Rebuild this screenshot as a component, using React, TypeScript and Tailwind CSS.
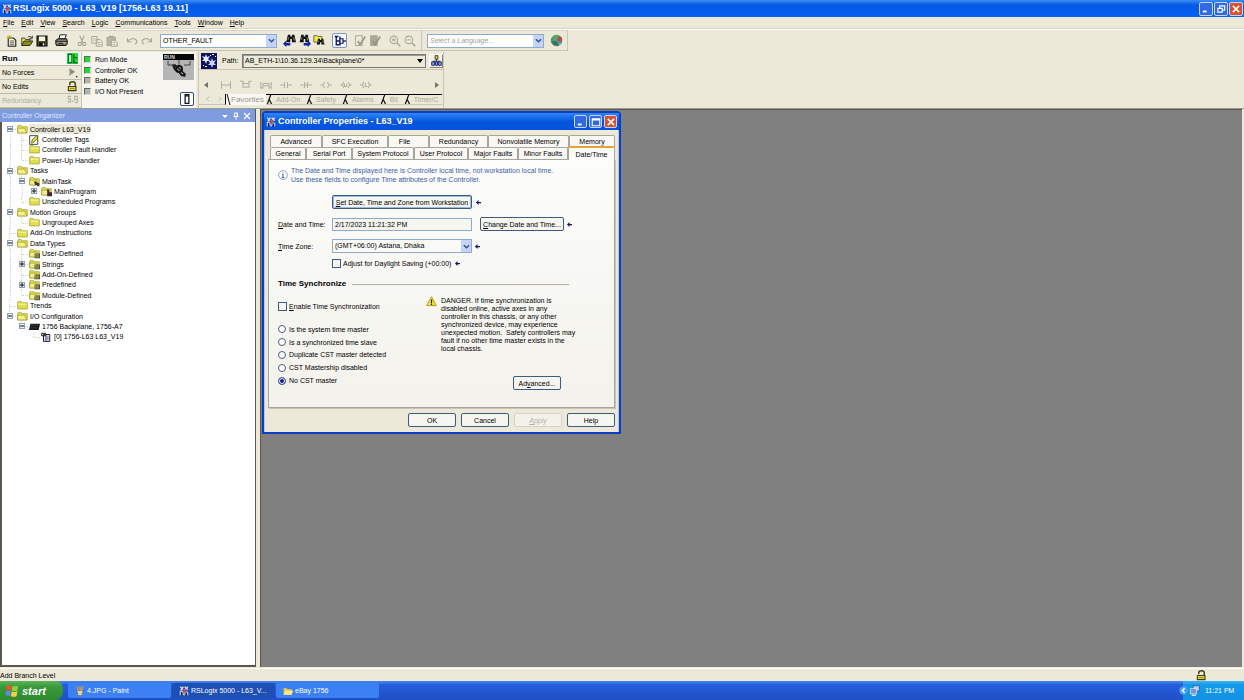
import { useState, type ReactNode } from 'react';
import clsx from 'clsx';

/* ---------- icons ---------- */

function Svg({ size = 'size-3', children }: { size?: string; children: ReactNode }) {
  return (
    <svg viewBox="0 0 16 16" className={clsx('shrink-0', size)} fill="none" aria-hidden="true">
      {children}
    </svg>
  );
}

const AppIcon = ({ size = 'size-[10px]' }: { size?: string }) => (
  <Svg size={size}>
    <path d="M2 15V8l4 1 1 6M9 15l1-6 4 1v5" fill="#10245c" stroke="#dfe6fa" strokeWidth="1.600" />
    <path d="M2 1l4 5M7 1L3 7" stroke="#dfe6fa" strokeWidth="2" />
    <path d="M9 1l5 5M14 1L9 7" stroke="#f4d9d9" strokeWidth="2.200" />
    <path d="M6 6l5 4M11 5l-4 5" stroke="#d23b3b" strokeWidth="2" />
  </Svg>
);

const NewIcon = () => (
  <Svg>
    <path d="M3 4h7l3 3v8H3z" fill="#fffbe0" stroke="#222" strokeWidth="1.5" />
    <path d="M5 8h6M5 10.5h6M5 13h6" stroke="#222" />
    <path d="M4 0v5M1 2l6 2M7 1L2 5" stroke="#b8a800" strokeWidth="1.2" />
  </Svg>
);

const OpenIcon = () => (
  <Svg>
    <path d="M1 14V4h4l1 2h6v3" fill="#f4ea5a" stroke="#333" strokeWidth="1.2" />
    <path d="M1 14l3-6h12l-4 6z" fill="#8f8a10" stroke="#222" strokeWidth="1.2" />
    <path d="M9 3c2-2 4-1 5 1M15 1v4h-4" stroke="#222" strokeWidth="1.2" />
  </Svg>
);

const SaveIcon = () => (
  <Svg>
    <path d="M1.5 1.5h13v13h-13z" fill="#55561a" stroke="#111" strokeWidth="1.8" />
    <path d="M4 2h8v6H4z" fill="#f4f3ec" />
    <path d="M4 10h8v5H4z" fill="#111" />
    <path d="M9 11h2v3H9z" fill="#eee" />
  </Svg>
);

const PrintIcon = () => (
  <Svg size="size-[13px]">
    <path d="M5 6l1-5h8l-2 5z" fill="#fff" stroke="#222" strokeWidth="1.2" />
    <path d="M1 8l3-2h10l1 2v4l-2 2H2l-1-2z" fill="#8a8a84" stroke="#222" strokeWidth="1.3" />
    <path d="M1 9h14M4 12h7" stroke="#222" strokeWidth="1.2" />
    <path d="M10 11h2" stroke="#e8e020" strokeWidth="1.5" />
  </Svg>
);

const CutIcon = () => (
  <Svg>
    <path d="M5 1l4 9M11 1L7 10" stroke="#aca899" strokeWidth="1.6" />
    <circle cx="5" cy="12" r="2.2" stroke="#aca899" strokeWidth="1.5" />
    <circle cx="11" cy="12" r="2.2" stroke="#aca899" strokeWidth="1.5" />
  </Svg>
);

const CopyIcon = () => (
  <Svg>
    <path d="M1 2h7v9H1zM7 6h5l3 3v6H7z" fill="#ece9d8" stroke="#aca899" strokeWidth="1.3" />
    <path d="M3 5h3M3 7h3M9 10h4M9 12.500h4" stroke="#aca899" />
  </Svg>
);

const PasteIcon = () => (
  <Svg>
    <path d="M1.500 3h11v11h-11z" fill="#b9b5a5" stroke="#aca899" strokeWidth="1.5" />
    <path d="M4 1h6v3H4z" fill="#aca899" />
    <path d="M7 7h5l3 3v5H7z" fill="#ece9d8" stroke="#a09c8d" strokeWidth="1.2" />
    <path d="M9 10h3M9 12.500h4" stroke="#aca899" />
  </Svg>
);

const UndoIcon = ({ flip = false }: { flip?: boolean }) => (
  <Svg>
    <g transform={flip ? 'matrix(-1 0 0 1 16 0)' : undefined}>
      <path d="M2 4v5h5M2 9c3-5 9-5 12-2 1 2 0 4-2 5" stroke="#aca899" strokeWidth="1.6" />
    </g>
  </Svg>
);

const BinocularIcon = ({ mode }: { mode: 'prev' | 'next' | 'folder' }) => (
  <Svg size="size-[13px]">
    {mode === 'folder' && <path d="M1 2h4l1 1h5v7H1z" fill="#f4ea3a" stroke="#555" />}
    <g transform={mode === 'folder' ? 'translate(3 5) scale(.8)' : mode === 'prev' ? 'translate(2 0)' : undefined}>
      <path d="M4 1h3v2h2V1h3l2 9H9V6H7v4H2z" fill="#111" />
      <path d="M4 7l1-3M11 4l1 4" stroke="#aaa" />
    </g>
    {mode === 'prev' && <path d="M0 12l4-4v3h5v3H4v2z" fill="#1226a8" />}
    {mode === 'next' && <path d="M16 12l-4-4v3H7v3h5v2z" fill="#1226a8" />}
  </Svg>
);

const TreeToggleIcon = () => (
  <Svg>
    <path d="M1 2h5M3 2v12M3 8h4M3 13h4M8 2v12" stroke="#111a60" strokeWidth="1.800" />
    <path d="M8 5h4v6H8z" fill="#fff" stroke="#111a60" strokeWidth="1.600" />
    <path d="M12 8h4" stroke="#111a60" strokeWidth="1.800" />
  </Svg>
);

const VerifyIcon = ({ solid = false }: { solid?: boolean }) => (
  <Svg>
    <path d="M2 1h9v13H2z" fill={solid ? '#aca899' : '#ece9d8'} stroke="#aca899" strokeWidth="1.3" />
    <path d="M5 8l3 5 7-11" stroke="#96927f" strokeWidth="2" />
  </Svg>
);

const ZoomIcon = ({ plus = false }: { plus?: boolean }) => (
  <Svg>
    <circle cx="6.500" cy="6.500" r="5" stroke="#aca899" strokeWidth="1.400" />
    <path d={plus ? 'M4 6.500h5M6.500 4v5' : 'M4 6.500h5'} stroke="#aca899" strokeWidth="1.400" />
    <path d="M10 10l5 5" stroke="#aca899" strokeWidth="2.200" />
  </Svg>
);

const GlobeIcon = () => (
  <Svg size="size-[13px]">
    <circle cx="8" cy="8" r="6.500" fill="#5b8f9c" stroke="#4d6f74" />
    <path d="M3 4c3-3 7-3 9-1l-3 4-4 1z" fill="#4fae5c" />
    <path d="M2 9c4-1 8 0 9 5-5 1-8-1-9-5z" fill="#357a49" />
    <circle cx="12" cy="6" r="3" fill="#c2463f" />
    <path d="M10 11h5l-3 3z" fill="#7faeb8" />
  </Svg>
);

const ControllerIcon = () => (
  <Svg size="size-[11px]">
    <path d="M0 0h16v16H0z" fill="#22dd33" />
    <path d="M2 2h5v12H2z" fill="#a8f8a8" stroke="#063" strokeWidth="1.500" />
    <path d="M10 2v5h5M10 9v5h5" stroke="#0a5a18" strokeWidth="1.800" />
  </Svg>
);

const ForceIcon = () => (
  <Svg size="size-[11px]">
    <path d="M4 2v11M5 3l6 4-6 4z" fill="#8d8a7c" stroke="#8d8a7c" />
    <path d="M13 13h2v2h-2z" fill="#222" />
  </Svg>
);

const LockIcon = () => (
  <Svg size="size-[11px]">
    <path d="M4 6V4c0-4 8-4 8 0v5" stroke="#3c3a10" strokeWidth="2" />
    <path d="M2 8h11v6H2z" fill="#e6dc3c" stroke="#3c3a10" strokeWidth="1.600" />
    <path d="M4 11h7" stroke="#6f6a14" />
  </Svg>
);

const RedundancyIcon = () => (
  <Svg size="size-[11px]">
    <path d="M6 2H2v4h3v4H1M7 9h3M15 2h-4v5h4V2v9h-4" stroke="#b3af9f" strokeWidth="1.500" />
  </Svg>
);

const PathIcon = () => (
  <Svg size="size-4">
    <path d="M0 0h16v16H0z" fill="#10125c" />
    <path d="M5 1l1 3 3-1-2 3 2 2-3 0-1 3-1-3-3 0 2-2-2-3 3 1z" fill="#e8eeff" />
    <path d="M11 5l1 3 3-1-2 3 2 2-3 0-1 3-1-3-3 0 2-2-2-3 3 1z" fill="#c9d6ff" />
    <path d="M11 1h2v1h-2zM14 3h1v1h-1zM2 12h1v1H2zM4 13h2v1H4zM9 2h1v1H9z" fill="#fff" />
  </Svg>
);

const NetworkIcon = () => (
  <Svg size="size-[11px]">
    <path d="M8 6v3M3 11V9h10v2" stroke="#222" strokeWidth="1.300" />
    <path d="M6 1h4v5H6z" fill="#f0e850" stroke="#223" strokeWidth="1.300" />
    <path d="M1 10h4v5H1zM6.500 10h3v5h-3zM11 10h4v5h-4z" fill="#8fa2e0" stroke="#16206e" strokeWidth="1.300" />
  </Svg>
);

function KeySwitch() {
  return (
    <svg viewBox="0 0 31 26" className="h-[26px] w-[31px]" aria-hidden="true">
      <path d="M0 0h31v26H0z" fill="#b5b5b5" />
      <path d="M0 0h31v6H0z" fill="#080808" />
      <text x="1" y="5" fontSize="5" fontWeight="bold" fontFamily="Liberation Sans, sans-serif" fill="#ddd">RUN</text>
      <path d="M5 7v4h6M16 6v5M27 7v4h-6" fill="none" stroke="#444" />
      <path d="M9 11l3-1 11 10-1 3-4-1-3-4-4-2z" fill="#1c1c1c" />
      <path d="M12 13l8 7" stroke="#d8d8d8" />
      <circle cx="16" cy="15" r="3" fill="none" stroke="#111" strokeWidth="2" />
    </svg>
  );
}

// contact / coil symbols on the instruction bar
const rungPaths = [
  'M2 3v10M14 3v10M2 8h12',
  'M0 3h4v8h8V3h4M4 6h8',
  'M1 4v9M15 4v9M1 12h3V6h8v6h3M4 9h8',
  'M0 8h5M11 8h5M6 4v8M10 4v8',
  'M0 8h5M11 8h5M6 4v8M10 4v8M5 11l6-6',
  'M0 8h3M13 8h3M6 4l-2 4 2 4M10 4l2 4-2 4',
  'M0 8h3M13 8h3M5 4L3 8l2 4M11 4l2 4-2 4M6 6v4h3V6',
  'M0 8h3M13 8h3M5 4L3 8l2 4M11 4l2 4-2 4M7 5v5h3',
];

type NodeIcon = 'open' | 'closed' | 'tags' | 'task' | 'program' | 'type' | 'chassis' | 'module';

function TreeIcon({ kind }: { kind: NodeIcon }) {
  if (kind === 'tags') {
    return (
      <Svg size="size-[10px]">
        <path d="M1 1h13v14H1z" fill="#fbfbe8" stroke="#444" strokeWidth="1.500" />
        <path d="M4 13l1-5 6-6 3 3-6 6z" fill="#e3df3c" stroke="#55551c" strokeWidth="1.200" />
      </Svg>
    );
  }
  if (kind === 'chassis') {
    return (
      <Svg size="size-[11px]">
        <path d="M2 4h14l-2 9H0z" fill="#191919" />
        <path d="M3 6h10M3 10h9" stroke="#666" strokeDasharray="2 1" />
      </Svg>
    );
  }
  if (kind === 'module') {
    return (
      <Svg size="size-[10px]">
        <path d="M1 2h6v4H1zM4 4h10v11H4z" fill="#e8e8f4" stroke="#222" strokeWidth="1.600" />
        <path d="M8 5v9M10 8h2M10 11h2" stroke="#222a66" strokeWidth="1.500" />
      </Svg>
    );
  }
  return (
    <Svg size="size-[11px]">
      <path d="M1 13V3l1-1h4l1 2h8v9z" fill="#e2df4e" stroke="#9a9728" />
      {kind === 'closed' ? (
        <path d="M2 6h12" stroke="#f8f7b0" strokeWidth="1.500" />
      ) : (
        <path d="M1 13V6h10l3 7z" fill="#f3f18c" stroke="#9a9728" />
      )}
      {kind === 'task' && <path d="M7 8h4l1 2h3v5h-3v-2H9z" fill="#3b3b30" />}
      {kind === 'program' && <path d="M9 5h3v4h4v6H9z" fill="#3f2436" />}
      {kind === 'type' && (
        <>
          <path d="M8 8h8v7H8z" fill="#57562c" />
          <path d="M10 9v5M13 9v5" stroke="#e8e6a0" />
        </>
      )}
    </Svg>
  );
}

const Chevron = () => (
  <span className="pointer-events-none absolute inset-y-px right-px flex w-[10px] items-center justify-center rounded-[1px] bg-[#c3d3fb]">
    <svg viewBox="0 0 8 8" className="size-[7px]" fill="none">
      <path d="M1 2.500L4 5.500 7 2.500" stroke="#3a5280" strokeWidth="1.600" />
    </svg>
  </span>
);

const PendingArrow = () => (
  <svg viewBox="0 0 8 8" className="size-[5px] shrink-0" aria-hidden="true">
    <path d="M0 4l4-4v3h4v2H4v3z" fill="#10106e" />
  </svg>
);

/* ---------- shared bits ---------- */

// first letter after & gets the underline
function Mnemonic({ text }: { text: string }) {
  const [before, after] = text.split('&');
  if (after === undefined) return <>{text}</>;
  return (
    <span className="whitespace-pre">
      {before}
      <u>{after[0]}</u>
      {after.slice(1)}
    </span>
  );
}

function WindowButtons({ small = false }: { small?: boolean }) {
  const base = clsx(
    'flex items-center justify-center rounded-[2px] border border-[#c5d5fa]',
    small ? 'size-[13px]' : 'size-[14px]'
  );
  return (
    <div className={clsx('flex', small ? 'gap-[2px]' : 'gap-px')}>
      <button aria-label="Minimize" className={clsx(base, 'bg-[#3369e0]')}>
        <Svg size="size-[10px]"><path d="M3 12h6" stroke="#fff" strokeWidth="3" /></Svg>
      </button>
      <button aria-label="Maximize" className={clsx(base, 'bg-[#3369e0]')}>
        <Svg size="size-[10px]">
          {small ? (
            <path d="M2 3h12v11H2zM2 4.500h12" stroke="#fff" strokeWidth="1.800" />
          ) : (
            <path d="M6 6V3h8v7h-3M3 7h7v6H3z" stroke="#fff" strokeWidth="1.800" />
          )}
        </Svg>
      </button>
      <button aria-label="Close" className={clsx(base, 'bg-[#d9522f]')}>
        <Svg size="size-[10px]"><path d="M3 3l10 10M13 3L3 13" stroke="#fff" strokeWidth="2.400" /></Svg>
      </button>
    </div>
  );
}

function PushButton({ label, className, disabled = false, focus = false }: {
  label: string;
  className: string;
  disabled?: boolean;
  focus?: boolean;
}) {
  return (
    <button
      disabled={disabled}
      className={clsx(
        'flex h-[14px] items-center justify-center whitespace-nowrap rounded-[2px] border',
        disabled ? 'border-[#d6d3c4] bg-[#f3f2ea] italic text-[#b5b1a2]' : 'border-[#3d5a80] bg-[#f6f5f0] text-black',
        focus && 'shadow-[inset_0_0_0_1px_#9db8e8]',
        className
      )}
    >
      <Mnemonic text={label} />
    </button>
  );
}

/* ---------- top area ---------- */

const menus = ['&File', '&Edit', '&View', '&Search', '&Logic', '&Communications', '&Tools', '&Window', '&Help'];

function IconButton({ label, children, pressed = false }: { label: string; children: ReactNode; pressed?: boolean }) {
  return (
    <button
      aria-label={label}
      className={clsx(
        'flex h-[15px] w-[15px] shrink-0 items-center justify-center',
        pressed && 'rounded-[2px] border border-[#7d95c6] bg-[#f8f9fd]'
      )}
    >
      {children}
    </button>
  );
}

function Toolbar() {
  return (
    <div className="flex h-[21px] w-[568px] items-center border-y border-r border-[#c9c5b4] border-t-[#d8d4c5] pl-1">
      <IconButton label="New"><NewIcon /></IconButton>
      <IconButton label="Open"><OpenIcon /></IconButton>
      <IconButton label="Save"><SaveIcon /></IconButton>
      <div className="ml-[5px] flex">
        <IconButton label="Print"><PrintIcon /></IconButton>
      </div>
      <div className="ml-[5px] flex">
        <IconButton label="Cut"><CutIcon /></IconButton>
        <IconButton label="Copy"><CopyIcon /></IconButton>
        <IconButton label="Paste"><PasteIcon /></IconButton>
      </div>
      <div className="ml-[5px] flex">
        <IconButton label="Undo"><UndoIcon /></IconButton>
        <IconButton label="Redo"><UndoIcon flip /></IconButton>
      </div>
      <div className="relative ml-[6px] w-[117px]">
        <select aria-label="Tag" className="block h-[14px] w-full appearance-none border border-[#8fa9cf] bg-white pl-[2px] leading-3">
          <option>OTHER_FAULT</option>
        </select>
        <Chevron />
      </div>
      <div className="ml-[5px] flex">
        <IconButton label="Find previous"><BinocularIcon mode="prev" /></IconButton>
        <IconButton label="Find next"><BinocularIcon mode="next" /></IconButton>
        <IconButton label="Find all"><BinocularIcon mode="folder" /></IconButton>
      </div>
      <div className="ml-[5px] flex">
        <IconButton label="Controller organizer" pressed><TreeToggleIcon /></IconButton>
      </div>
      <div className="ml-[5px] flex">
        <IconButton label="Verify routine"><VerifyIcon /></IconButton>
        <IconButton label="Verify controller"><VerifyIcon solid /></IconButton>
      </div>
      <div className="ml-[5px] flex">
        <IconButton label="Zoom in"><ZoomIcon plus /></IconButton>
        <IconButton label="Zoom out"><ZoomIcon /></IconButton>
      </div>
      <div className="ml-1 h-full w-px bg-[#c9c5b4]" />
      <div className="relative ml-[5px] w-[117px]">
        <select aria-label="Language" className="block h-[14px] w-full appearance-none border border-[#8fa9cf] bg-white pl-[2px] text-[7px] italic leading-3 text-[#a0a0a0]">
          <option>Select a Language...</option>
        </select>
        <Chevron />
      </div>
      <div className="ml-[5px] flex">
        <IconButton label="Web"><GlobeIcon /></IconButton>
      </div>
    </div>
  );
}

const modeRows = [
  { text: 'Run', icon: <ControllerIcon />, className: 'bg-[#f8f7f2] text-[8px] font-bold' },
  { text: 'No Forces', icon: <ForceIcon />, className: '' },
  { text: 'No Edits', icon: <LockIcon />, className: '' },
  { text: 'Redundancy', icon: <RedundancyIcon />, className: 'text-[#b3af9f]' },
];

const statusRows = [
  { text: 'Run Mode', on: true },
  { text: 'Controller OK', on: true },
  { text: 'Battery OK', on: false },
  { text: 'I/O Not Present', on: false },
];

const instructionTabs = ['Add-On', 'Safety', 'Alarms', 'Bit', 'Timer/C'];

function OnlineBar() {
  return (
    <div className="flex h-[56px]">
      <div className="grid w-[82px] auto-rows-fr border-r border-[#c9c5b4]">
        {modeRows.map((row) => (
          <div key={row.text} className={clsx('flex items-center justify-between border-b border-[#c0bcab] pl-[2px] pr-[3px]', row.className)}>
            <span>{row.text}</span>
            {row.icon}
          </div>
        ))}
      </div>
      <div className="flex w-[114px] justify-between bg-[#f6f5ef] pl-[2px] pr-[2px] pt-[2px]">
        <ul className="grid h-[43px] auto-rows-fr">
          {statusRows.map((row) => (
            <li key={row.text} className="flex items-center gap-[4px]">
              <span className={clsx('size-[7px] border border-t-[#5d6b57] border-l-[#5d6b57] border-[#dcdcd0]', row.on ? 'bg-[#1fdc35]' : 'bg-[#b4b1a8]')} />
              {row.text}
            </li>
          ))}
        </ul>
        <div className="flex flex-col items-end justify-between pb-[2px]">
          <KeySwitch />
          <button aria-label="Controller properties" className="flex size-[14px] items-center justify-center rounded-[2px] border border-[#2c4a72] bg-white">
            <Svg size="size-[10px]">
              <path d="M5 1h6v14H5z" fill="#fff" stroke="#111" strokeWidth="2" />
              <path d="M5 3h6" stroke="#111" strokeWidth="2" />
            </Svg>
          </button>
        </div>
      </div>
      <div className="ml-[2px] w-[246px] border-x border-[#c9c5b4]">
        <div className="flex h-[18px] items-center border-b border-[#c9c5b4] pl-[2px]">
          <PathIcon />
          <label htmlFor="path" className="ml-[5px] w-5">Path:</label>
          <div className="relative w-[184px]">
            <select id="path" className="block h-[14px] w-full appearance-none border border-[#777] bg-[#ece9d8] pl-[2px] leading-3 shadow-[inset_1px_1px_0_#999]">
              <option>AB_ETH-1\10.36.129.34\Backplane\0*</option>
            </select>
            <span className="pointer-events-none absolute right-[3px] top-[5px] border-x-[3px] border-t-[4px] border-x-transparent border-t-black" />
          </div>
          <button aria-label="Who active" className="ml-[3px] flex size-[14px] items-center justify-center border border-[#8b887a] border-l-white border-t-white bg-[#f3f1e6]">
            <NetworkIcon />
          </button>
        </div>
        <div className="flex h-6 items-center pl-[5px] pt-[6px]">
          <span className="mr-3 border-y-[3px] border-r-[4px] border-y-transparent border-r-[#77746a]" />
          <div className="flex flex-1 gap-2">
            {rungPaths.map((d) => (
              <Svg key={d}>
                <path d={d} stroke="#b3af9f" strokeWidth="1.400" />
              </Svg>
            ))}
          </div>
          <span className="mr-1 border-y-[3px] border-l-[4px] border-y-transparent border-l-[#77746a]" />
        </div>
        <div className="flex h-[11px] overflow-hidden pr-px text-[#aca899]">
          <span className="flex w-[27px] items-center gap-[6px] border-b border-r border-[#c9c5b4] border-r-black pl-[6px]">
            <Svg size="size-[6px]"><path d="M11 2L4 8l7 6" stroke="#b8b4a4" strokeWidth="2" /></Svg>
            <Svg size="size-[6px]"><path d="M4 2l7 6-7 6" stroke="#b8b4a4" strokeWidth="2" /></Svg>
          </span>
          <span className="flex items-center bg-[#f8f7f2] pr-[2px] text-[8px] text-[#9c988a]">
            <svg viewBox="0 0 5 11" className="h-[11px] w-[5px]"><path d="M1 0l3 11" stroke="#111" /></svg>
            Favorites
          </span>
          <div className="flex min-w-0 flex-1 overflow-hidden border-b border-t border-[#c9c5b4] border-t-black">
            {instructionTabs.map((tab) => (
              <span key={tab} className="flex shrink-0 items-center whitespace-nowrap pr-[6px]">
                <svg viewBox="0 0 8 11" className="h-[11px] w-[8px]" fill="none"><path d="M1 11L5 0M3 5l3 6" stroke="#111" strokeWidth="1.200" /></svg>
                <span className="pl-[2px]">{tab}</span>
              </span>
            ))}
          </div>
        </div>
      </div>
    </div>
  );
}

/* ---------- controller organizer ---------- */

interface TreeNode {
  text: string;
  depth: number;
  icon: NodeIcon;
  box?: '+' | '-';
}

const tree: TreeNode[] = [
  { text: 'Controller L63_V19', depth: 0, icon: 'open', box: '-' },
  { text: 'Controller Tags', depth: 1, icon: 'tags' },
  { text: 'Controller Fault Handler', depth: 1, icon: 'closed' },
  { text: 'Power-Up Handler', depth: 1, icon: 'closed' },
  { text: 'Tasks', depth: 0, icon: 'open', box: '-' },
  { text: 'MainTask', depth: 1, icon: 'task', box: '-' },
  { text: 'MainProgram', depth: 2, icon: 'program', box: '+' },
  { text: 'Unscheduled Programs', depth: 1, icon: 'closed' },
  { text: 'Motion Groups', depth: 0, icon: 'open', box: '-' },
  { text: 'Ungrouped Axes', depth: 1, icon: 'closed' },
  { text: 'Add-On Instructions', depth: 0, icon: 'closed' },
  { text: 'Data Types', depth: 0, icon: 'open', box: '-' },
  { text: 'User-Defined', depth: 1, icon: 'type' },
  { text: 'Strings', depth: 1, icon: 'type', box: '+' },
  { text: 'Add-On-Defined', depth: 1, icon: 'type' },
  { text: 'Predefined', depth: 1, icon: 'type', box: '+' },
  { text: 'Module-Defined', depth: 1, icon: 'type' },
  { text: 'Trends', depth: 0, icon: 'closed' },
  { text: 'I/O Configuration', depth: 0, icon: 'open', box: '-' },
  { text: '1756 Backplane, 1756-A7', depth: 1, icon: 'chassis', box: '-' },
  { text: '[0] 1756-L63 L63_V19', depth: 2, icon: 'module' },
];

// does the vertical guide of this level run on below the row?
function continues(index: number, level: number) {
  for (const node of tree.slice(index + 1)) {
    if (node.depth < level) return false;
    if (node.depth === level) return true;
  }
  return false;
}

function Organizer() {
  return (
    <aside className="flex w-[256px] shrink-0 flex-col border-r border-[#5c5850]">
      <header className="flex h-[13px] items-center justify-between bg-[#7f9ce0] pl-[2px] pr-1 text-[#dfe8fd]">
        <h2>Controller Organizer</h2>
        <div className="flex items-center gap-[3px] text-white">
          <button aria-label="Menu"><Svg size="size-[8px]"><path d="M2 6h12l-6 6z" fill="#fff" /></Svg></button>
          <button aria-label="Pin"><Svg size="size-[8px]"><path d="M5 2h6v7H5zM3 9h10M8 9v6M10 2v7" stroke="#fff" strokeWidth="1.800" /></Svg></button>
          <button aria-label="Close"><Svg size="size-[8px]"><path d="M2 2l12 12M14 2L2 14" stroke="#fff" strokeWidth="2.400" /></Svg></button>
        </div>
      </header>
      <div className="flex-1 border-b-2 border-l-2 border-[#5c5850] bg-white pl-[2px] pt-[2px]">
        <ul className="grid h-[218px] auto-rows-fr">
          {tree.map((node, i) => (
            <li key={node.text} className="flex">
              {Array.from({ length: node.depth }, (_, level) => (
                <span key={level} className="flex w-3 justify-center">
                  {continues(i, level) && <span className="h-full border-l border-dotted border-[#d4d4d4]" />}
                </span>
              ))}
              <span className="relative flex w-3 items-center justify-center">
                <span className={clsx('absolute left-[5px] top-0 border-l border-dotted border-[#d4d4d4]', i === 0 ? 'h-0' : continues(i, node.depth) ? 'h-full' : 'h-1/2')} />
                <span className="absolute left-[6px] right-0 top-1/2 border-t border-dotted border-[#d4d4d4]" />
                {node.box && (
                  <button aria-label="Toggle" className="relative flex size-[6px] items-center justify-center border border-[#8a9fc0] bg-[#f4f4ee]">
                    <Svg size="size-1">
                      <path d={node.box === '+' ? 'M0 8h16M8 0v16' : 'M0 8h16'} stroke="#111" strokeWidth="4" />
                    </Svg>
                  </button>
                )}
              </span>
              <span className="flex w-[13px] items-center pl-px"><TreeIcon kind={node.icon} /></span>
              <span className={clsx('flex items-center whitespace-nowrap px-px', i === 0 && 'bg-[#ece9d8]')}>{node.text}</span>
            </li>
          ))}
        </ul>
      </div>
    </aside>
  );
}

/* ---------- controller properties dialog ---------- */

const backTabs = [
  { text: 'Advanced', width: 'w-[52px]' },
  { text: 'SFC Execution', width: 'w-[66px]' },
  { text: 'File', width: 'w-[41px]', left: true },
  { text: 'Redundancy', width: 'w-[59px]' },
  { text: 'Nonvolatile Memory', width: 'w-[81px]' },
  { text: 'Memory', width: 'w-[46px]' },
];

const frontTabs = [
  { text: 'General', width: 'w-[36px]' },
  { text: 'Serial Port', width: 'w-[46px]' },
  { text: 'System Protocol', width: 'w-[62px]' },
  { text: 'User Protocol', width: 'w-[54px]' },
  { text: 'Major Faults', width: 'w-[50px]' },
  { text: 'Minor Faults', width: 'w-[50px]' },
];

const masterStates = [
  'Is the system time master',
  'Is a synchronized time slave',
  'Duplicate CST master detected',
  'CST Mastership disabled',
  'No CST master',
];

const tabClass = 'h-3 shrink-0 rounded-t-[2px] border border-b-0 border-[#a5a898] bg-[#f9f8f4] text-center leading-[11px] whitespace-nowrap';
const checkClass = 'size-[9px] shrink-0 appearance-none border border-[#3d5a80] bg-[#f6f6f3] checked:bg-[#2c4a72]';

function PropertiesDialog() {
  const [master, setMaster] = useState('No CST master');

  return (
    <section
      role="dialog"
      aria-label="Controller Properties"
      className="absolute left-px top-px flex w-[359px] flex-col rounded-t-[4px] border-2 border-[#0a3fc4] bg-[#ece9d8]"
    >
      <header className="flex h-[17px] shrink-0 items-center justify-between bg-linear-to-b from-[#2f86f6] via-[#0656e0] to-[#0553da] pl-[2px] pr-[2px] text-white">
        <div className="flex items-center gap-[2px]">
          <AppIcon />
          <h2 className="text-[9px] font-bold">Controller Properties - L63_V19</h2>
        </div>
        <WindowButtons small />
      </header>

      <div className="flex flex-1 flex-col border-x border-[#b7c7e8] px-[3px] pb-[5px] pt-[5px]">
        <div role="tablist" className="flex flex-col pl-[2px]">
          <div className="flex">
            {backTabs.map((tab) => (
              <button key={tab.text} role="tab" className={clsx(tabClass, tab.width, tab.left && 'pr-2')}>
                {tab.text}
              </button>
            ))}
          </div>
          <div className="flex">
            {frontTabs.map((tab) => (
              <button key={tab.text} role="tab" className={clsx(tabClass, tab.width)}>
                {tab.text}
              </button>
            ))}
            <button role="tab" aria-selected="true" className="relative z-10 -mb-px -mt-px h-[14px] w-[47px] shrink-0 rounded-t-[2px] border border-b-0 border-t-2 border-[#a5a898] border-t-[#e8a23a] bg-[#fcfcfa] leading-[9px]">
              Date/Time
            </button>
          </div>
        </div>

        <div className="flex h-[249px] flex-col border border-[#a5a898] bg-linear-to-b from-[#fcfcfa] to-[#f3f2ec] pl-[9px] shadow-[1px_1px_0_#c8c5b4]">
          <div className="mt-[6px] flex items-center gap-[3px] leading-[9px] text-[#3b63a8]">
            <Svg size="size-[10px]">
              <circle cx="8" cy="8" r="7" fill="#fff" stroke="#7f95c0" strokeWidth="1.400" />
              <path d="M8 4v1.500M8 7v5M6.500 7.500H8M6 12h4" stroke="#33559c" strokeWidth="1.500" />
            </Svg>
            <p>
              The Date and Time displayed here is Controller local time, not workstation local time.
              <br />
              Use these fields to configure Time attributes of the Controller.
            </p>
          </div>

          <div className="mt-[11px] flex items-center gap-1 pl-[54px]">
            <PushButton label="&Set Date, Time and Zone from Workstation" className="w-[140px]" focus />
            <PendingArrow />
          </div>

          <div className="mt-2 flex items-center">
            <label htmlFor="date" className="w-[54px]"><Mnemonic text="&Date and Time:" /></label>
            <input id="date" readOnly value="2/17/2023 11:21:32 PM" className="h-[13px] w-[140px] border border-[#8fa9cf] bg-[#f6f5f0] px-[2px]" />
            <PushButton label="&Change Date and Time..." className="ml-2 mr-[3px] w-[84px]" />
            <PendingArrow />
          </div>

          <div className="mt-2 flex items-center">
            <label htmlFor="zone" className="w-[54px]"><Mnemonic text="&Time Zone:" /></label>
            <div className="relative mr-[3px] w-[140px]">
              <select id="zone" className="block h-[14px] w-full appearance-none border border-[#8fa9cf] bg-[#f9f9f6] pl-[2px] leading-3">
                <option>(GMT+06:00) Astana, Dhaka</option>
              </select>
              <Chevron />
            </div>
            <PendingArrow />
          </div>

          <label className="mt-[6px] flex items-center gap-[2px] pl-[54px]">
            <input type="checkbox" className={checkClass} />
            Adjust for Daylight Saving (+00:00)
            <span className="pl-[2px]"><PendingArrow /></span>
          </label>

          <div className="mt-[11px] flex items-center pr-[45px]">
            <h3 className="w-[74px] text-[8px] font-bold leading-[10px]">Time Synchronize</h3>
            <div className="h-px flex-1 bg-[#b5b2a4]" />
          </div>

          <div className="mt-[7px] flex">
            <div className="w-[148px] pt-[6px]">
              <label className="flex items-center gap-[2px]">
                <input type="checkbox" className={checkClass} />
                <Mnemonic text="&Enable Time Synchronization" />
              </label>
              <div className="mt-3 grid h-16 auto-rows-fr">
                {masterStates.map((state) => (
                  <label key={state} className="flex items-center gap-[3px]">
                    <input
                      type="radio"
                      name="master"
                      checked={master === state}
                      onChange={() => setMaster(state)}
                      className="size-2 appearance-none rounded-full border border-[#4a5f80] bg-white checked:bg-[#14148c] checked:shadow-[inset_0_0_0_1px_#fff]"
                    />
                    {state}
                  </label>
                ))}
              </div>
            </div>
            <Svg size="size-[11px]">
              <path d="M8 1l7 13H1z" fill="#f8e23a" stroke="#b09a14" strokeWidth="1.400" />
              <path d="M8 5v5M8 11v2" stroke="#222" strokeWidth="1.800" />
            </Svg>
            <div className="pl-[4px]">
              <p className="pt-px leading-[8px]">
                DANGER. If time synchronization is<br />
                disabled online, active axes in any<br />
                controller in this chassis, or any other<br />
                synchronized device, may experience<br />
                unexpected motion.&nbsp; Safety controllers may<br />
                fault if no other time master exists in the<br />
                local chassis.
              </p>
              <PushButton label="Ad&vanced..." className="ml-[72px] mt-[23px] w-[48px]" />
            </div>
          </div>
        </div>

        <div className="mt-[5px] flex justify-end gap-[5px]">
          <PushButton label="OK" className="w-[48px]" />
          <PushButton label="Cancel" className="w-[48px]" />
          <PushButton label="&Apply" className="w-[48px]" disabled />
          <PushButton label="Help" className="w-[48px]" />
        </div>
      </div>
    </section>
  );
}

/* ---------- taskbar ---------- */

const tasks = [
  {
    text: '4.JPG - Paint',
    active: false,
    icon: (
      <Svg size="size-[10px]">
        <path d="M3 7h10l-2 8H5z" fill="#d9d3c0" stroke="#75664a" />
        <path d="M5 7L3 1M8 7V0M10 7l3-6" stroke="#e0a23a" strokeWidth="2" />
      </Svg>
    ),
  },
  { text: 'RSLogix 5000 - L63_V...', active: true, icon: <AppIcon /> },
  {
    text: 'eBay 1756',
    active: false,
    icon: (
      <Svg size="size-[10px]">
        <path d="M1 3h5l1 2h7v9H1z" fill="#e8c33c" />
        <path d="M3 7h13l-2 7H1z" fill="#fbe88a" />
      </Svg>
    ),
  },
];

function Taskbar() {
  return (
    <footer className="flex h-[19px] shrink-0 items-stretch bg-linear-to-b from-[#4a8af0] via-[#245edc] via-20% to-[#1f4fc4] text-white">
      <button className="flex w-[63px] items-center gap-[3px] rounded-r-[8px] bg-linear-to-b from-[#5cb45c] via-[#3a993a] via-30% to-[#2f8a2f] pl-[6px]">
        <Svg size="size-[13px]">
          <path d="M1 2c2-1 4-1 6 0L6 8C4 7 2 7 0 8z" fill="#e8542c" />
          <path d="M8 2c2 1 4 1 7 0l-1 6c-2 1-4 1-7 0z" fill="#8fd048" />
          <path d="M0 9c2-1 4-1 6 0l-1 6c-2-1-4-1-6 0z" fill="#5a8cf0" />
          <path d="M7 9c2 1 4 1 7 0l-1 6c-2 1-4 1-7 0z" fill="#f8d038" />
        </Svg>
        <span className="text-[11px] font-bold italic leading-3">start</span>
      </button>
      <div className="flex flex-1 gap-px py-[2px] pl-[5px]">
        {tasks.map((task) => (
          <button key={task.text} className={clsx('flex w-[103px] items-center gap-[2px] rounded-[2px] pl-[7px]', task.active ? 'bg-[#1e4fb4]' : 'bg-[#3c81f3]')}>
            {task.icon}
            <span className="whitespace-nowrap">{task.text}</span>
          </button>
        ))}
      </div>
      <div className="flex w-[61px] items-center bg-linear-to-b from-[#3ab4f4] via-[#139bec] via-20% to-[#1290e0]">
        <button aria-label="Show hidden icons" className="-ml-1">
          <Svg size="size-[9px]">
            <circle cx="8" cy="8" r="7.500" fill="#4f9ff4" />
            <path d="M10 4L6 8l4 4" stroke="#fff" strokeWidth="2.400" />
          </Svg>
        </button>
        <span className="ml-px">
          <Svg size="size-[11px]">
            <path d="M6 1h9v8H6z" fill="#b9cdf0" stroke="#27488c" />
            <path d="M2 5h9v8H2z" fill="#6f98e0" stroke="#eef" />
            <path d="M4 15h6" stroke="#dde6f8" strokeWidth="2" />
          </Svg>
        </span>
        <time className="ml-[5px]">11:21 PM</time>
      </div>
    </footer>
  );
}

export default function App() {
  return (
    <div className="flex h-screen flex-col overflow-hidden bg-[#ece9d8] font-['Liberation_Sans',Arial,sans-serif] text-[7px] leading-[9px] text-black">
      <header className="flex h-[17px] shrink-0 items-center justify-between bg-linear-to-b from-[#3a8cf4] via-[#0458e4] via-30% to-[#0560f4] pl-[2px] pr-[1px] text-white">
        <div className="flex items-center gap-px">
          <AppIcon />
          <h1 className="text-[9px] font-bold">RSLogix 5000 - L63_V19 [1756-L63 19.11]</h1>
        </div>
        <WindowButtons />
      </header>

      <nav className="flex h-[12px] shrink-0 items-center gap-[7px] border-b border-[#d8d4c5] pl-[3px]">
        {menus.map((menu) => (
          <button key={menu}><Mnemonic text={menu} /></button>
        ))}
      </nav>

      <div className="shrink-0 border-t border-white">
        <Toolbar />
        <div className="pt-px"><OnlineBar /></div>
      </div>

      <main className="flex min-h-0 flex-1 gap-1 border-t border-[#9d9a8c]">
        <Organizer />
        <div className="relative mr-[2px] min-w-0 flex-1 border-l border-t border-[#5c5850] bg-[#808080]">
          <PropertiesDialog />
        </div>
      </main>

      <div className="mt-px flex h-[13px] shrink-0 items-center justify-between border-t border-white pr-[37px]">
        <span>Add Branch Level</span>
        <LockIcon />
      </div>
      <Taskbar />
    </div>
  );
}
